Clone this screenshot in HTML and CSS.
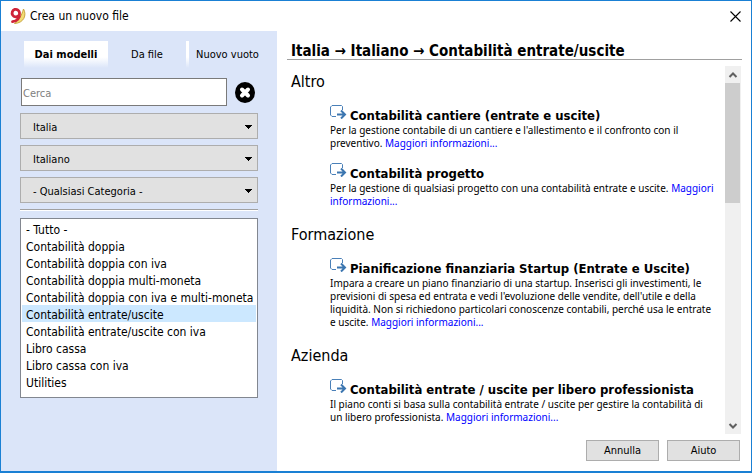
FILE: index.html
```
<!DOCTYPE html>
<html lang="it">
<head>
<meta charset="utf-8">
<title>Crea un nuovo file</title>
<link rel="stylesheet" href="styles.css">
</head>
<body>
<svg width="0" height="0" class="defs" aria-hidden="true">
  <symbol id="open" viewBox="0 0 17 14">
    <path d="M12.500 5V1.500L11.500 .5H2L.5 2V10L2 11.500H6" fill="none" stroke="#4a80b8" stroke-width="1"/>
    <path d="M7 9.500H15M11 5.500L15 9.500L11 13.500" fill="none" stroke="#3c76b0" stroke-width="2"/>
  </symbol>
</svg>
<div class="window">
  <header class="titlebar">
    <svg class="logo" width="17" height="18" viewBox="0 0 17 18" aria-hidden="true">
      <path d="M14.500 2C18 8 15 16 5.500 16.500C9.500 14 12.500 9 14.500 2Z" fill="#f3dc74" stroke="#c9a53c" stroke-width="1"/>
      <path d="M10.500 6A3.700 3.800 0 1 0 9.500 8.700M10.500 6C11 11 8 14.500 3.500 14.700" fill="none" stroke="#cf2338" stroke-width="2.800" stroke-linecap="round"/>
    </svg>
    <h1>Crea un nuovo file</h1>
    <button class="close" type="button" aria-label="Chiudi">
      <svg width="11" height="11" viewBox="0 0 11 11"><path d="M.5 .5L10.500 10.500M10.500 .5L.5 10.500" stroke="#000" stroke-width="1.100"/></svg>
    </button>
  </header>
  <div class="columns">
    <aside class="sidebar">
      <nav class="tabs">
        <button class="tab active" type="button">Dai modelli</button>
        <button class="tab" type="button">Da file</button>
        <button class="tab split" type="button">Nuovo vuoto</button>
      </nav>
      <div class="search">
        <input type="text" placeholder="Cerca" aria-label="Cerca">
        <button type="button" aria-label="Cancella ricerca">
          <svg width="20" height="21" viewBox="0 0 20 21"><ellipse cx="10" cy="10.500" rx="10" ry="10.500"/><path d="M7 7.500L13 13.500M13 7.500L7 13.500" stroke="#fff" stroke-width="4" stroke-linecap="round"/></svg>
        </button>
      </div>
      <div class="combos">
        <select aria-label="Paese"><option>Italia</option></select>
        <select aria-label="Lingua"><option>Italiano</option></select>
        <select aria-label="Categoria"><option>- Qualsiasi Categoria -</option></select>
      </div>
      <hr>
      <select class="list" size="10" aria-label="Tipo di contabilità">
        <option>- Tutto -</option>
        <option>Contabilità doppia</option>
        <option>Contabilità doppia con iva</option>
        <option>Contabilità doppia multi-moneta</option>
        <option>Contabilità doppia con iva e multi-moneta</option>
        <option selected>Contabilità entrate/uscite</option>
        <option>Contabilità entrate/uscite con iva</option>
        <option>Libro cassa</option>
        <option>Libro cassa con iva</option>
        <option>Utilities</option>
      </select>
    </aside>
    <main class="main">
      <h2>Italia → Italiano → Contabilità entrate/uscite</h2>
      <div class="view">
        <div class="content">
          <section>
            <h3>Altro</h3>
            <article>
              <h4><svg class="ico" aria-hidden="true"><use href="#open"/></svg>Contabilità cantiere (entrate e uscite)</h4>
              <p>Per la gestione contabile di un cantiere e l'allestimento e il confronto con il preventivo. <a href="#">Maggiori informazioni...</a></p>
            </article>
            <article>
              <h4><svg class="ico" aria-hidden="true"><use href="#open"/></svg>Contabilità progetto</h4>
              <p>Per la gestione di qualsiasi progetto con una contabilità entrate e uscite. <a href="#">Maggiori informazioni...</a></p>
            </article>
          </section>
          <section>
            <h3>Formazione</h3>
            <article>
              <h4><svg class="ico" aria-hidden="true"><use href="#open"/></svg>Pianificazione finanziaria Startup (Entrate e Uscite)</h4>
              <p>Impara a creare un piano finanziario di una startup. Inserisci gli investimenti, le previsioni di spesa ed entrata e vedi l'evoluzione delle vendite, dell'utile e della liquidità. Non si richiedono particolari conoscenze contabili, perché usa le entrate e uscite. <a href="#">Maggiori informazioni...</a></p>
            </article>
          </section>
          <section>
            <h3>Azienda</h3>
            <article>
              <h4><svg class="ico" aria-hidden="true"><use href="#open"/></svg>Contabilità entrate / uscite per libero professionista</h4>
              <p>Il piano conti si basa sulla contabilità entrate / uscite per gestire la contabilità di un libero professionista. <a href="#">Maggiori informazioni...</a></p>
            </article>
          </section>
        </div>
        <div class="scrollbar" aria-hidden="true">
          <svg width="16" height="17" viewBox="0 0 16 17"><path d="M4.500 11L8 7.500L11.500 11" fill="none" stroke="#606060" stroke-width="2"/></svg>
          <div class="track"><div class="thumb"></div></div>
          <svg width="16" height="17" viewBox="0 0 16 17"><path d="M4.500 7L8 10.500L11.500 7" fill="none" stroke="#606060" stroke-width="2"/></svg>
        </div>
      </div>
      <footer>
        <button type="button">Annulla</button>
        <button type="button">Aiuto</button>
      </footer>
    </main>
  </div>
</div>
</body>
</html>
```
FILE: styles.css
```
* { box-sizing: border-box; }

body {
  margin: 0;
  font: 11px/13px "DejaVu Sans Condensed", "DejaVu Sans", sans-serif;
  color: #000;
}

h1, h2, h3, h4, p { margin: 0; font-weight: normal; }
button, input, select { font: inherit; color: inherit; }
.defs { position: absolute; }

.window {
  display: flex;
  flex-direction: column;
  height: 100vh;
  border: 1px solid #1a80d4;
  border-bottom-width: 2px;
  background: #fff;
  overflow: hidden;
}

.titlebar {
  display: flex;
  align-items: center;
  flex: none;
  height: 30px;
  padding: 0 10px 0 8px;
}
.titlebar h1 { flex: 1; margin-left: 4px; font-size: 12px; }
.close { display: flex; padding: 0; border: 0; background: none; }

.columns { display: flex; flex: 1; min-height: 0; }

.sidebar {
  flex: none;
  width: 276px;
  padding: 10px 19px;
  background: #dbe5f9;
}

.tabs { display: flex; height: 27px; margin: 0 0 10px 4px; }
.tab {
  flex: 1;
  padding: 0;
  border: 0;
  background: none;
  white-space: nowrap;
}
.tab.active {
  flex: none;
  width: 84px;
  background: linear-gradient(#fff 60%, #dbe5f9);
  font-weight: bold;
}
.tab.split {
  position: relative;
  flex: none;
  width: 72px;
  padding-left: 10px;
}
.tab.split::before {
  content: "";
  position: absolute;
  inset: 0 auto 0 0;
  width: 3px;
  background: linear-gradient(#fff 60%, #dbe5f9);
}

.search { display: flex; align-items: center; gap: 8px; margin: 0 0 7px 1px; }
.search input {
  width: 206px;
  height: 28px;
  padding: 2px 1px 0;
  border: 1px solid #7a7a7a;
  border-radius: 0;
  background: #fff;
}
.search input::placeholder { color: #808080; opacity: 1; }
.search button { display: flex; padding: 0; border: 0; background: none; }

.combos { --arrow: linear-gradient(#000, #000); display: grid; gap: 6px; }
.combos select {
  appearance: none;
  width: 100%;
  height: 26px;
  padding: 2px 12px 0;
  border: 1px solid #adadad;
  border-radius: 0;
  background-color: #e1e1e1;
  background-image: var(--arrow), var(--arrow), var(--arrow), var(--arrow);
  background-repeat: no-repeat;
  background-size: 7px 1px, 5px 1px, 3px 1px, 1px 1px;
  background-position: right 5px top 11px, right 6px top 12px, right 7px top 13px, right 8px top 14px;
}

hr {
  height: 2px;
  margin: 6px 0 7px;
  border: 0;
  border-top: 1px solid #a0a0a0;
  background: #fff;
}

.list {
  display: block;
  appearance: none;
  width: 100%;
  height: 180px;
  padding: 1px;
  border: 1px solid #828790;
  border-radius: 0;
  background: #fff;
  font-size: 12px;
  overflow: hidden;
  outline: 0;
}
.list option { height: 17px; min-height: 17px; padding: 3px 4px 0; line-height: 14px; }
.list option:checked { background: #cce8ff linear-gradient(#cce8ff, #cce8ff); color: #000; }

.main {
  display: flex;
  flex: 1;
  flex-direction: column;
  min-width: 0;
  padding: 12px 9px 10px;
}
.main h2 {
  margin-left: 1px;
  padding: 0 4px;
  border-bottom: 1px solid #a0a0a0;
  font-size: 15px;
  line-height: 16px;
  font-weight: bold;
}

.view { display: flex; flex: 1; min-height: 0; margin-top: 6px; }
.content { flex: 1; min-width: 0; padding: 6px 9px 0 5px; overflow: hidden; }
section { margin-bottom: 17px; }
h3 { margin-bottom: 12px; font-size: 16px; line-height: 20px; }
article { margin: 0 0 12px 39px; }
h4 { display: flex; gap: 3px; padding-top: 4px; font-size: 13px; line-height: 16px; font-weight: bold; white-space: nowrap; }
.ico { flex: none; width: 17px; height: 14px; margin-top: -3px; }
article p { font: 10px/13px "Noto Sans", sans-serif; }
a { color: #00f; text-decoration: none; }

.scrollbar { display: flex; flex-direction: column; flex: none; width: 16px; margin-right: 1px; background: #f0f0f0; }
.scrollbar svg { flex: none; }
.track { flex: 1; }
.thumb { width: 15px; height: 36%; background: #cdcdcd; }

footer { display: flex; flex: none; justify-content: flex-end; gap: 8px; margin-top: 6px; padding-right: 2px; }
footer button {
  width: 73px;
  height: 21px;
  padding: 0;
  border: 1px solid #adadad;
  background: #e1e1e1;
}
```
